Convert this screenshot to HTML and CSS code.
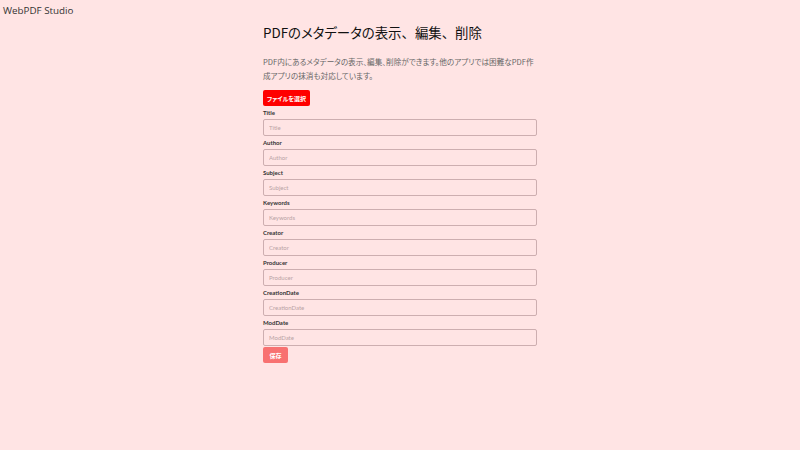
FILE: index.html
```html
<!DOCTYPE html>
<html lang="ja">
<head>
<meta charset="utf-8">
<title>WebPDF Studio</title>
<link rel="stylesheet" href="styles.css">
</head>
<body>
<header class="site-header">WebPDF Studio</header>
<main class="main">
  <h1 class="title">PDFのメタデータの表示<span class="pu">、</span>編集<span class="pu">、</span>削除</h1>
  <p class="lead">PDF内にあるメタデータの表示、編集、削除ができます。他のアプリでは困難なPDF作成アプリの抹消も対応しています。</p>
  <button class="btn btn-file">ファイルを選択</button>
  <form class="form">
    <label class="field"><span class="label">Title</span><input class="input" placeholder="Title"></label>
    <label class="field"><span class="label">Author</span><input class="input" placeholder="Author"></label>
    <label class="field"><span class="label">Subject</span><input class="input" placeholder="Subject"></label>
    <label class="field"><span class="label">Keywords</span><input class="input" placeholder="Keywords"></label>
    <label class="field"><span class="label">Creator</span><input class="input" placeholder="Creator"></label>
    <label class="field"><span class="label">Producer</span><input class="input" placeholder="Producer"></label>
    <label class="field"><span class="label">CreationDate</span><input class="input" placeholder="CreationDate"></label>
    <label class="field"><span class="label">ModDate</span><input class="input" placeholder="ModDate"></label>
    <button type="button" class="btn btn-save">保存</button>
  </form>
</main>
</body>
</html>
```
FILE: styles.css
```css
* { box-sizing: border-box; }
html, body { margin: 0; padding: 0; }
body {
  background: #ffe4e4;
  font-family: Lato, "Noto Sans CJK JP", sans-serif;
  color: #222;
  width: 800px;
  height: 450px;
  overflow: hidden;
}
.site-header {
  padding: 4px 3px;
  font-family: "Open Sans", "Noto Sans", sans-serif;
  font-size: 9.8px;
  color: #333;
  line-height: 13px;
}
.main {
  width: 274px;
  margin: 0 auto;
}
.title {
  margin: 0;
  font-family: "Noto Sans CJK JP", sans-serif;
  font-feature-settings: "palt";
  font-weight: 400;
  font-size: 13.4px;
  line-height: 22px;
  color: #111;
}
.pu { font-feature-settings: normal; }
.lead {
  margin: 12px 0 7px;
  font-family: "Noto Sans CJK JP", sans-serif;
  font-feature-settings: "palt";
  font-size: 7.6px;
  line-height: 14px;
  color: #666;
}
.btn {
  border: none;
  border-radius: 2px;
  font-family: "Noto Sans CJK JP", sans-serif;
  font-feature-settings: "palt";
  font-weight: 700;
  font-size: 6px;
  color: #fff;
  height: 16px;
  padding: 0;
  cursor: pointer;
}
.btn-file { background: #ff0000; display: block; width: 47px; }
.btn-save { background: #f87171; width: 25px; align-self: flex-start; margin-top: 1px; }
.form {
  display: flex;
  flex-direction: column;
}
.field {
  display: flex;
  flex-direction: column;
}
.label {
  font-size: 6px;
  font-weight: 700;
  color: #333;
  line-height: 13px;
}
.input {
  height: 17px;
  border: 1px solid #cdaeb0;
  border-radius: 2px;
  background: #ffe4e4;
  font-family: Lato, sans-serif;
  font-size: 6px;
  padding: 0 5px;
}
.input::placeholder { color: #b9a3a5; }
```
